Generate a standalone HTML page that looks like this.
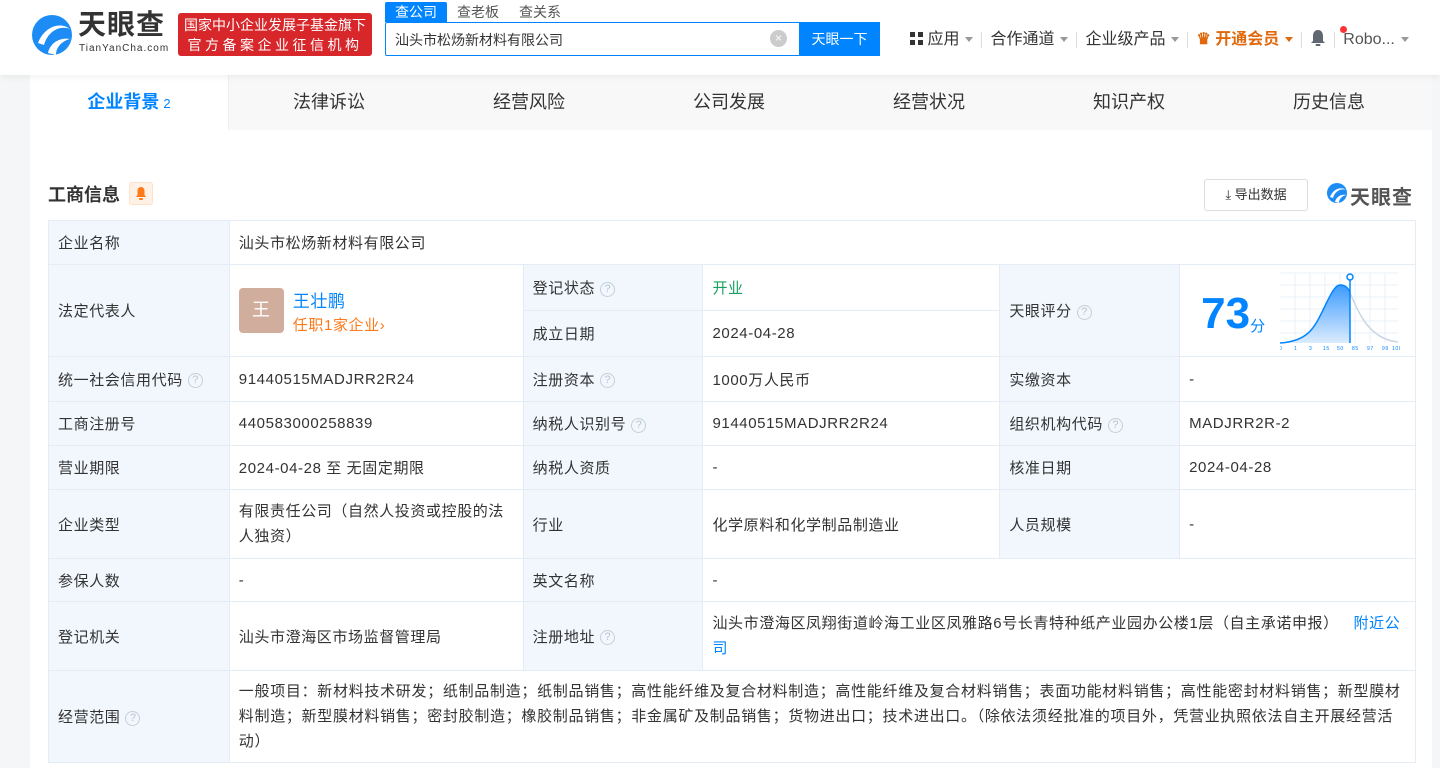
<!DOCTYPE html>
<html><head><meta charset="utf-8"><style>
*{box-sizing:border-box;margin:0;padding:0}
body{width:1440px;height:768px;overflow:hidden;background:#f5f6f7;font-family:"Liberation Sans","Noto Sans CJK SC",sans-serif;color:#333;position:relative}
.hdr{position:absolute;left:0;top:0;width:1440px;height:75px;background:#fff;box-shadow:0 2px 6px rgba(0,0,0,.06);z-index:2}
.abs{position:absolute}
.card{position:absolute;left:30px;top:75px;width:1402px;height:693px;background:#fff}
.tabs{position:absolute;left:0;top:0;width:1402px;height:55px;background:#f8f8f8;display:flex}
.tabs div{width:200px;text-align:center;line-height:55px;font-size:18px;color:#333}
.tabs .on{background:#fff;color:#0084ff;font-weight:bold;width:199px;border-right:1px solid #eee}
table{position:absolute;left:18px;top:145px;width:1368px;border-collapse:collapse;font-size:15px;letter-spacing:.6px}
td{border:1px solid #e4edf6;padding:0 9px;vertical-align:middle;color:#333}
td.l{background:#f1f7fd;}
.q{display:inline-block;width:15px;height:15px;border:1px solid #c3cfdc;border-radius:50%;font-size:11px;line-height:13px;text-align:center;color:#b8c4d0;vertical-align:middle;margin-left:5px;letter-spacing:0}
.sep{display:inline-block;width:1px;height:16px;background:#ddd;vertical-align:middle;margin:0 8px}
.tri{display:inline-block;border:4px solid transparent;border-top:5px solid #999;border-bottom:0;vertical-align:middle;margin-left:6px}
.nav{position:absolute;top:29px;font-size:16px;color:#333;line-height:20px}
</style></head><body>
<div class="hdr">
 <svg class="abs" style="left:30px;top:13px" width="44" height="44" viewBox="0 0 44 44"><circle cx="22" cy="22" r="20" fill="#1d8df5"/><path d="M8 30 C14 14 30 8 40 16 C30 12 18 18 14 32Z" fill="#fff"/><path d="M18 40 C20 30 30 24 40 26 C32 28 26 34 26 42Z" fill="#fff"/></svg>
 <div class="abs" style="left:78px;top:9px;font-size:28px;line-height:32px;font-weight:bold;color:#333;letter-spacing:1px">天眼查</div>
 <div class="abs" style="left:79px;top:43px;font-size:10px;line-height:12px;color:#333;letter-spacing:1px">TianYanCha.com</div>
 <div class="abs" style="left:178px;top:13px;width:194px;height:43px;background:#d8272b;border-radius:3px;color:#fff;font-size:14px;text-align:center;line-height:20px;padding-top:2px">国家中小企业发展子基金旗下<br><span style="letter-spacing:3.5px">官方备案企业征信机构</span></div>
 <div class="abs" style="left:385px;top:2px;width:62px;height:20px;background:#0084ff;color:#fff;font-size:14px;text-align:center;line-height:20px;border-radius:2px 2px 0 0">查公司</div>
 <div class="abs" style="left:457px;top:2px;font-size:14px;color:#555;line-height:20px">查老板</div>
 <div class="abs" style="left:519px;top:2px;font-size:14px;color:#555;line-height:20px">查关系</div>
 <div class="abs" style="left:385px;top:22px;width:495px;height:34px;border:1px solid #0084ff;border-radius:2px;background:#fff">
  <span class="abs" style="left:9px;top:7px;font-size:14px;color:#333">汕头市松炀新材料有限公司</span>
  <span class="abs" style="left:384px;top:7px;width:17px;height:17px;border-radius:50%;background:#ccc;color:#fff;font-size:12px;text-align:center;line-height:17px">×</span>
  <span class="abs" style="left:413px;top:-1px;width:81px;height:34px;background:#0084ff;color:#fff;font-size:14px;text-align:center;line-height:34px">天眼一下</span>
 </div>
 <div class="nav" style="left:910px"><span style="display:inline-block;width:13px;height:13px;vertical-align:-1px;background:linear-gradient(#333,#333) 0 0/5px 5px no-repeat,linear-gradient(#333,#333) 8px 0/5px 5px no-repeat,linear-gradient(#333,#333) 0 8px/5px 5px no-repeat,linear-gradient(#333,#333) 8px 8px/5px 5px no-repeat"></span> 应用<span class="tri"></span><span class="sep"></span>合作通道<span class="tri"></span><span class="sep"></span>企业级产品<span class="tri"></span><span class="sep"></span><span style="color:#e0690d;font-weight:bold">♛ 开通会员</span><span class="tri" style="border-top-color:#e0690d"></span><span class="sep"></span><svg width="16" height="18" viewBox="0 0 16 18" style="vertical-align:-3px"><path d="M8 1C4.5 1 3 4 3 7V12L1 14H15L13 12V7C13 4 11.5 1 8 1Z" fill="#606770"/><rect x="5.5" y="15" width="5" height="2" rx="1" fill="#606770"/></svg><span class="sep"></span><span style="color:#555">Robo...</span><span class="tri"></span></div>
 <div class="abs" style="left:1340px;top:26px;width:7px;height:7px;border-radius:50%;background:#f33"></div>
</div>
<div class="card">
 <div class="tabs"><div class="on">企业背景<span style="font-size:13px;font-weight:normal;margin-left:4px">2</span></div><div>法律诉讼</div><div>经营风险</div><div>公司发展</div><div>经营状况</div><div>知识产权</div><div>历史信息</div></div>
 <div class="abs" style="left:18px;top:106px;font-size:18px;font-weight:bold;color:#333">工商信息</div>
 <div class="abs" style="left:99px;top:107px;width:24px;height:23px;background:#fff1e6;border:1px solid #fde1c8;border-radius:3px"><svg width="22" height="21" viewBox="0 0 22 21"><path d="M11 4C8.5 4 7.5 6 7.5 8V12L6 14H16L14.5 12V8C14.5 6 13.5 4 11 4Z" fill="#ff7a1a"/><rect x="9" y="15" width="4" height="2" rx="1" fill="#ff7a1a"/></svg></div>
 <div class="abs" style="left:1174px;top:104px;width:104px;height:32px;border:1px solid #ddd;border-radius:3px;font-size:13px;text-align:center;line-height:30px;color:#333">⤓ 导出数据</div>
 <svg class="abs" style="left:1296px;top:107px" width="22" height="22" viewBox="0 0 44 44"><circle cx="22" cy="22" r="20" fill="#1d8df5"/><path d="M8 30 C14 14 30 8 40 16 C30 12 18 18 14 32Z" fill="#fff"/><path d="M18 40 C20 30 30 24 40 26 C32 28 26 34 26 42Z" fill="#fff"/></svg>
 <div class="abs" style="left:1320px;top:106px;font-size:20px;font-weight:bold;color:#555;letter-spacing:1px">天眼查</div>
 <table>
  <colgroup><col style="width:181px"><col style="width:294px"><col style="width:180px"><col style="width:297px"><col style="width:180px"><col style="width:236px"></colgroup>
  <tr style="height:44px"><td class="l">企业名称</td><td colspan="5">汕头市松炀新材料有限公司</td></tr>
  <tr style="height:46px"><td class="l" rowspan="2">法定代表人</td><td rowspan="2"><div style="display:flex;align-items:center"><div style="width:45px;height:45px;background:#d0ad9c;border-radius:4px;color:#fff;text-align:center;line-height:45px;font-size:18px">王</div><div style="margin-left:9px"><div style="color:#0084ff;font-size:17px">王壮鹏</div><div style="color:#ff7a1a;font-size:15px;margin-top:2px">任职1家企业›</div></div></div></td><td class="l">登记状态<span class="q">?</span></td><td style="color:#19a15f">开业</td><td class="l" rowspan="2">天眼评分<span class="q">?</span></td><td rowspan="2" style="position:relative;padding:0"><span class="abs" style="left:21px;top:24px;font-size:44px;font-weight:bold;color:#0084ff;letter-spacing:0">73</span><span class="abs" style="left:70px;top:50px;font-size:15px;color:#0084ff">分</span>
   <svg class="abs" style="left:100px;top:6px" width="120" height="80" viewBox="0 0 120 80"><g stroke="#e9f1fa" stroke-width="1"><path d="M0 2H118M0 14H118M0 26H118M0 38H118M0 50H118M0 62H118M15 2V72M30 2V72M45 2V72M60 2V72M75 2V72M90 2V72M105 2V72"/></g><defs><linearGradient id="g" x1="0" y1="0" x2="0" y2="1"><stop offset="0" stop-color="#3c9bff"/><stop offset="1" stop-color="#dcecfd"/></linearGradient></defs><path d="M0 72 C30 70 35 55 45 35 C52 20 56 14 60 14 C66 14 69 18 70 22 L70 72Z" fill="url(#g)"/><path d="M0 72 C30 70 35 55 45 35 C52 20 56 14 60 14 C66 14 69 18 70 22" fill="none" stroke="#0084ff" stroke-width="1.5"/><path d="M70 22 C80 45 90 68 118 71" fill="none" stroke="#c9d5e2" stroke-width="1.5"/><path d="M70 8V72" stroke="#0084ff" stroke-width="1.5"/><circle cx="70" cy="6" r="3" fill="#fff" stroke="#0084ff" stroke-width="1.5"/><g font-size="5" fill="#0084ff" font-family="Liberation Sans"><text x="-1" y="79">0</text><text x="14" y="79">1</text><text x="29" y="79">3</text><text x="43" y="79">15</text><text x="57" y="79">50</text><text x="72" y="79">85</text><text x="87" y="79">97</text><text x="102" y="79">99</text><text x="112" y="79">100</text></g></svg></td></tr>
  <tr style="height:46px"><td class="l">成立日期</td><td>2024-04-28</td></tr>
  <tr style="height:45px"><td class="l">统一社会信用代码<span class="q">?</span></td><td>91440515MADJRR2R24</td><td class="l">注册资本<span class="q">?</span></td><td>1000万人民币</td><td class="l">实缴资本</td><td>-</td></tr>
  <tr style="height:44px"><td class="l">工商注册号</td><td>440583000258839</td><td class="l">纳税人识别号<span class="q">?</span></td><td>91440515MADJRR2R24</td><td class="l">组织机构代码<span class="q">?</span></td><td>MADJRR2R-2</td></tr>
  <tr style="height:44px"><td class="l">营业期限</td><td>2024-04-28 至 无固定期限</td><td class="l">纳税人资质</td><td>-</td><td class="l">核准日期</td><td>2024-04-28</td></tr>
  <tr style="height:69px"><td class="l">企业类型</td><td style="line-height:25px">有限责任公司（自然人投资或控股的法人独资）</td><td class="l">行业</td><td>化学原料和化学制品制造业</td><td class="l">人员规模</td><td>-</td></tr>
  <tr style="height:43px"><td class="l">参保人数</td><td>-</td><td class="l">英文名称</td><td colspan="3">-</td></tr>
  <tr style="height:69px"><td class="l">登记机关</td><td>汕头市澄海区市场监督管理局</td><td class="l">注册地址<span class="q">?</span></td><td colspan="3" style="line-height:25px;letter-spacing:0.6px">汕头市澄海区凤翔街道岭海工业区凤雅路6号长青特种纸产业园办公楼1层（自主承诺申报） <span style="color:#0084ff;margin-left:10px">附近公司</span></td></tr>
  <tr style="height:92px"><td class="l">经营范围<span class="q">?</span></td><td colspan="5" style="line-height:25px;letter-spacing:0.7px">一般项目：新材料技术研发；纸制品制造；纸制品销售；高性能纤维及复合材料制造；高性能纤维及复合材料销售；表面功能材料销售；高性能密封材料销售；新型膜材料制造；新型膜材料销售；密封胶制造；橡胶制品销售；非金属矿及制品销售；货物进出口；技术进出口。（除依法须经批准的项目外，凭营业执照依法自主开展经营活动）</td></tr>
 </table>
</div>
</body></html>
